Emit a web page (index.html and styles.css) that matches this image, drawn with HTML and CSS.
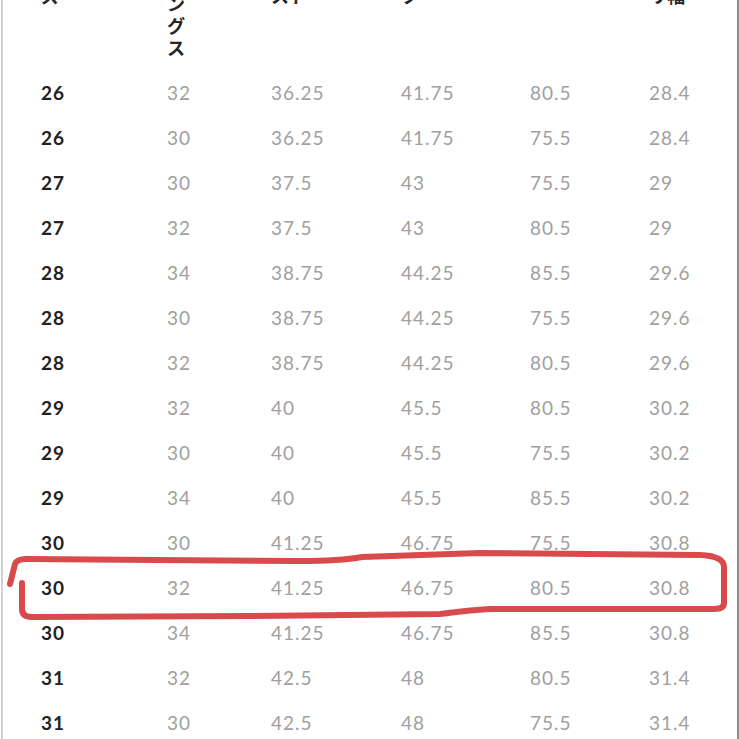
FILE: index.html
```html
<!DOCTYPE html>
<html lang="ja">
<head>
<meta charset="utf-8">
<title>サイズ表</title>
<link rel="stylesheet" href="styles.css">
</head>
<body>
<div class="sheet">
  <div class="row head">
    <div class="th">サイ<br>ズ</div>
    <div class="th tall">レ<br>ン<br>グ<br>ス</div>
    <div class="th">ウエ<br>スト</div>
    <div class="th">ヒッ<br>プ</div>
    <div class="th hidden">股下</div>
    <div class="th">ワタ<br>リ幅</div>
  </div>
  <div class="row"><div class="size">26</div><div>32</div><div>36.25</div><div>41.75</div><div>80.5</div><div>28.4</div></div>
  <div class="row"><div class="size">26</div><div>30</div><div>36.25</div><div>41.75</div><div>75.5</div><div>28.4</div></div>
  <div class="row"><div class="size">27</div><div>30</div><div>37.5</div><div>43</div><div>75.5</div><div>29</div></div>
  <div class="row"><div class="size">27</div><div>32</div><div>37.5</div><div>43</div><div>80.5</div><div>29</div></div>
  <div class="row"><div class="size">28</div><div>34</div><div>38.75</div><div>44.25</div><div>85.5</div><div>29.6</div></div>
  <div class="row"><div class="size">28</div><div>30</div><div>38.75</div><div>44.25</div><div>75.5</div><div>29.6</div></div>
  <div class="row"><div class="size">28</div><div>32</div><div>38.75</div><div>44.25</div><div>80.5</div><div>29.6</div></div>
  <div class="row"><div class="size">29</div><div>32</div><div>40</div><div>45.5</div><div>80.5</div><div>30.2</div></div>
  <div class="row"><div class="size">29</div><div>30</div><div>40</div><div>45.5</div><div>75.5</div><div>30.2</div></div>
  <div class="row"><div class="size">29</div><div>34</div><div>40</div><div>45.5</div><div>85.5</div><div>30.2</div></div>
  <div class="row"><div class="size">30</div><div>30</div><div>41.25</div><div>46.75</div><div>75.5</div><div>30.8</div></div>
  <div class="row"><div class="size">30</div><div>32</div><div>41.25</div><div>46.75</div><div>80.5</div><div>30.8</div></div>
  <div class="row"><div class="size">30</div><div>34</div><div>41.25</div><div>46.75</div><div>85.5</div><div>30.8</div></div>
  <div class="row"><div class="size">31</div><div>32</div><div>42.5</div><div>48</div><div>80.5</div><div>31.4</div></div>
  <div class="row"><div class="size">31</div><div>30</div><div>42.5</div><div>48</div><div>75.5</div><div>31.4</div></div>
</div>
<svg class="mark" width="739" height="739" viewBox="0 0 739 739" xmlns="http://www.w3.org/2000/svg">
  <path d="M10 584 L15 564 Q17 559 26 559 L300 561 Q340 561 362 557 L480 553 L700 555 Q724 556 724 567 L724 603 Q724 609 714 609 L490 609 Q470 610 440 614 L250 616 L32 617 Q22 617 22 609 L22 583" fill="none" stroke="#d94a4c" stroke-width="6" stroke-linecap="round" stroke-linejoin="round"/>
</svg>
</body>
</html>
```
FILE: styles.css
```css
html, body {
  margin: 0;
  padding: 0;
  background: #ffffff;
  overflow: hidden;
}
body {
  width: 739px;
  height: 739px;
  position: relative;
}
.sheet {
  margin: -38px 0 0 1px;
  border-left: 2px solid #d2d2d2;
  border-right: 2px solid #8e8e8e;
  padding-left: 38px;
  min-height: 800px;
  font-family: Lato, "Liberation Sans", sans-serif;
}
.row {
  display: grid;
  grid-template-columns: 126px 104px 130px 129px 119px 1fr;
  height: 45px;
  align-items: center;
  font-size: 19px;
  letter-spacing: 1px;
  color: #a0a0a0;
}
.row .size {
  font-weight: 700;
  color: #222222;
}
.row.head {
  height: auto;
  align-items: end;
  padding-bottom: 12px;
  font-family: "Noto Sans CJK JP", sans-serif;
  font-weight: 700;
  font-size: 18px;
  line-height: 22px;
  letter-spacing: 0;
  color: #262626;
}
.th {
  padding-bottom: 52px;
}
.th.tall {
  padding-bottom: 0;
}
.th.hidden {
  padding-bottom: 70px;
}
.mark {
  position: absolute;
  left: 0;
  top: 0;
  pointer-events: none;
}
```
